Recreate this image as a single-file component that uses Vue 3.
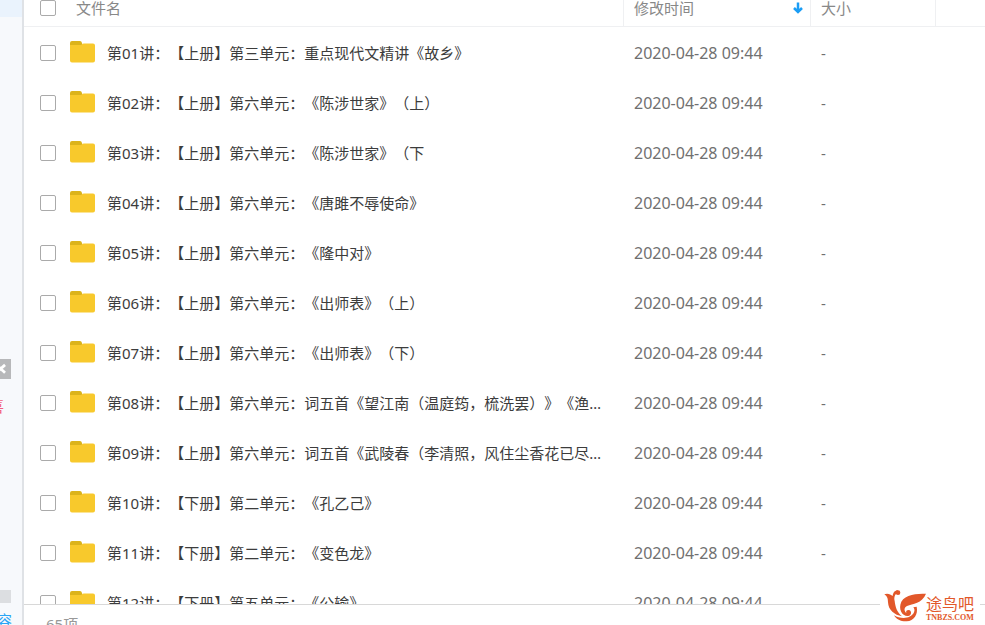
<template>
  <div class="disk">
    <aside class="sidebar">
      <div class="nav-active"></div>
      <button class="ad-close" type="button" aria-label="关闭">
        <svg viewBox="0 0 12 20"><path d="M-4 5.5L5.5 14M-4 14L5.5 5.5" /></svg>
      </button>
      <div class="ad-text">喜</div>
      <div class="capacity"></div>
      <a class="expand" href="#">容</a>
    </aside>

    <main class="main">
      <div class="list">
        <table>
          <colgroup>
            <col class="col-name" />
            <col class="col-time" />
            <col class="col-size" />
            <col />
          </colgroup>
          <thead>
            <tr>
              <th>
                <div class="cell">
                  <input v-model="allChecked" type="checkbox" aria-label="全选" />
                  <span class="title">文件名</span>
                </div>
              </th>
              <th>
                <div class="cell sort">
                  <span>修改时间</span>
                  <svg class="arrow" viewBox="0 0 10 12"><path d="M5 0.5V10M1 6L5 10L9 6" /></svg>
                </div>
              </th>
              <th><div class="cell">大小</div></th>
              <th></th>
            </tr>
          </thead>
          <tbody>
            <tr v-for="(file, index) in files" :key="file">
              <td>
                <div class="cell">
                  <input :id="`file-${index}`" v-model="checked" type="checkbox" :value="index" />
                  <svg class="folder" viewBox="0 0 25 22">
                    <path d="M0 2Q0 0 2 0H10Q11.500 0 12 2L13 5H0Z" fill="#dcb31b" />
                    <path d="M0 4H11L13.500 2.500H23Q25 2.500 25 4.500V19.500Q25 21.500 23 21.500H2Q0 21.500 0 19.500Z" fill="#f8c92c" />
                  </svg>
                  <label class="name" :for="`file-${index}`">{{ file }}</label>
                </div>
              </td>
              <td class="time">2020-04-28 09:44</td>
              <td>-</td>
              <td></td>
            </tr>
          </tbody>
        </table>
      </div>
      <footer class="status">65项</footer>
    </main>

    <div class="watermark">
      <svg class="bird" viewBox="0 0 126 98">
        <circle cx="42" cy="9" r="7" />
        <path d="M1 14C10 9 20 14 26 19C27 9 32 2 42 2L40 9C33 14 29 22 32 34C34 52 39 68 54 80C32 76 13 62 12 38C12 24 8 19 1 14Z" />
        <path d="M126 12C98 12 64 14 52 36C42 58 54 80 72 79C84 78 84 62 74 61C68 61 65 65 67 70C60 64 59 54 69 49C86 42 114 42 126 12Z" />
        <path d="M30 77C50 89 80 89 90 68C93 61 91 57 88 53L98 51C103 74 90 93 68 95C52 96 38 90 30 77Z" />
      </svg>
      <div class="brand">
        <span class="brand-name">途鸟吧</span>
        <span class="brand-url">TNBZS.COM</span>
      </div>
    </div>
  </div>
</template>

<script setup>
import { computed, ref } from 'vue'

const files = [
  '第01讲：【上册】第三单元：重点现代文精讲《故乡》',
  '第02讲：【上册】第六单元：《陈涉世家》（上）',
  '第03讲：【上册】第六单元：《陈涉世家》（下',
  '第04讲：【上册】第六单元：《唐雎不辱使命》',
  '第05讲：【上册】第六单元：《隆中对》',
  '第06讲：【上册】第六单元：《出师表》（上）',
  '第07讲：【上册】第六单元：《出师表》（下）',
  '第08讲：【上册】第六单元：词五首《望江南（温庭筠，梳洗罢）》《渔家傲》',
  '第09讲：【上册】第六单元：词五首《武陵春（李清照，风住尘香花已尽）》',
  '第10讲：【下册】第二单元：《孔乙己》',
  '第11讲：【下册】第二单元：《变色龙》',
  '第12讲：【下册】第五单元：《公输》'
]

const checked = ref([])

const allChecked = computed({
  get: () => checked.value.length === files.length,
  set: (value) => {
    checked.value = value ? files.map((_, index) => index) : []
  }
})
</script>

<style>
body {
  background: #fff;
}
</style>

<style scoped>
.disk {
  position: relative;
  display: grid;
  grid-template-columns: 24px minmax(0, 1fr);
  height: 100vh;
  overflow: hidden;
  font-family: "Noto Sans", "Noto Sans CJK SC", sans-serif;
  font-size: 15px;
  text-spacing-trim: space-all;
}

.sidebar {
  display: flex;
  flex-direction: column;
  overflow: hidden;
  background: #f7f9fc;
  border-right: 2px solid #dfe2e6;
}

.nav-active {
  height: 17px;
  flex: none;
  background: #eaf3fd;
}

.ad-close {
  width: 11px;
  height: 20px;
  flex: none;
  margin-top: 342px;
  padding: 0;
  border: 0;
  background: #b7b8ba;
}

.ad-close svg {
  display: block;
  width: 11px;
  height: 20px;
  fill: none;
  stroke: #fff;
  stroke-width: 3;
}

.ad-text {
  display: flex;
  justify-content: flex-end;
  width: 4px;
  margin-top: 17px;
  overflow: hidden;
  line-height: 20px;
  color: #f2607d;
}

.capacity {
  width: 11px;
  height: 13px;
  flex: none;
  margin-top: auto;
  background: #dcdee1;
}

.expand {
  display: flex;
  justify-content: flex-end;
  width: 12px;
  height: 14px;
  flex: none;
  margin-top: 8px;
  overflow: hidden;
  line-height: 18px;
  color: #2aa5f5;
  text-decoration: none;
}

.main {
  display: flex;
  flex-direction: column;
  min-height: 0;
}

.list {
  flex: 1;
  min-height: 0;
  overflow: hidden;
}

table {
  width: 100%;
  table-layout: fixed;
  border-collapse: separate;
  border-spacing: 0;
}

.col-name {
  width: 600px;
}

.col-time {
  width: 187px;
}

.col-size {
  width: 125px;
}

th {
  padding: 0 0 10px 10px;
  border-bottom: 1px solid #eff0f2;
  border-right: 1px solid #eff0f2;
  font-weight: normal;
  text-align: left;
  line-height: 16px;
  color: #888;
}

th:last-child {
  border-right: 0;
}

td {
  box-sizing: border-box;
  height: 50px;
  padding: 2px 0 0 10px;
  line-height: 24px;
  color: #707070;
}

th:first-child,
td:first-child {
  padding-left: 16px;
}

.cell {
  display: flex;
  align-items: center;
}

.title {
  margin-left: 20px;
}

.sort {
  justify-content: space-between;
  padding-right: 7px;
}

.arrow {
  width: 10px;
  height: 12px;
  fill: none;
  stroke: #1a9df5;
  stroke-width: 2.5;
}

input {
  appearance: none;
  flex: none;
  width: 16px;
  height: 16px;
  margin: 0;
  border: 1px solid #aaa;
  border-radius: 2px;
  background: #fff;
}

input:checked {
  background: #1a9df5;
}

.folder {
  flex: none;
  width: 25px;
  height: 22px;
  margin: 0 0 2px 14px;
}

.name {
  margin-left: 12px;
  max-width: 500px;
  overflow: hidden;
  text-overflow: ellipsis;
  white-space: nowrap;
  color: #3c3c3c;
}

.time {
  font-size: 16px;
}

.status {
  height: 20px;
  padding-left: 22px;
  overflow: hidden;
  border-top: 1px solid #d8d8d8;
  line-height: 38px;
  color: #999;
}

.watermark {
  position: absolute;
  right: 5px;
  bottom: 2px;
  display: flex;
  align-items: center;
  padding: 0 6px 0 4px;
  background: #fff;
  color: #e2582a;
}

.bird {
  width: 42px;
  height: 34px;
  fill: currentColor;
}

.brand {
  display: flex;
  flex-direction: column;
  padding-top: 4px;
}

.brand-name {
  font-size: 16px;
  line-height: 20px;
}

.brand-url {
  font-family: "Liberation Serif", serif;
  font-size: 8px;
  font-weight: bold;
  line-height: 8px;
}
</style>
